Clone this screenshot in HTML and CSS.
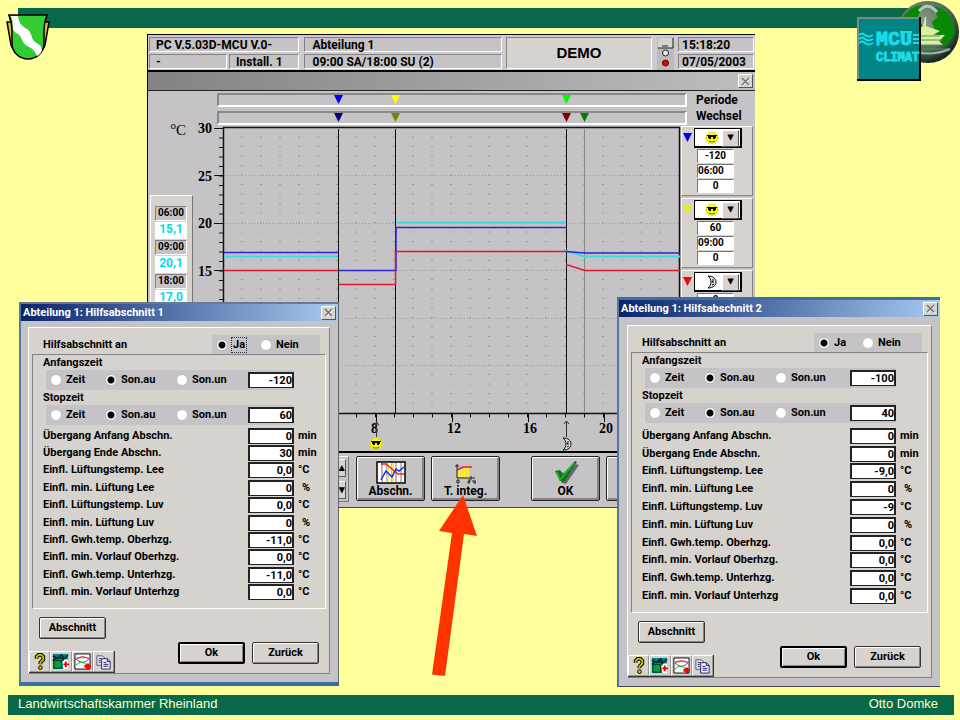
FILE: index.html
```html
<!DOCTYPE html>
<html lang="de">
<head>
<meta charset="utf-8">
<title>Abteilung 1: Hilfsabschnitt</title>
<link rel="stylesheet" href="styles.css">
</head>
<body>
<svg class="defs" aria-hidden="true">
  <defs>
    <symbol id="sun" viewBox="0 0 14 14">
      <path d="M7 0l1.500 2 2-1.200.5 2.400 2.500 0-1 2.300 2 1.500-2 1.500 1 2.300-2.500 0-.5 2.400-2-1.200L7 14l-1.500-2-2 1.200L3 10.800l-2.500 0 1-2.300L0 7l1.500-1.500-1-2.300 2.500 0 .5-2.400 2 1.200z" fill="#e8e000"/>
      <circle cx="7" cy="7" r="5" fill="#ff0"/>
      <path d="M2 4h10v1h-1v2h-1v1H8V6H6v2H4V7H3V5H2z" fill="#000"/>
      <path d="M4 10h1v1h4v-1h1" fill="none" stroke="#664"/>
    </symbol>
    <symbol id="moon" viewBox="0 0 10 14">
      <path d="M1 1c5 0 8 2.500 8 6s-3 6-8 6c2-1.500 3-3.500 3-6s-1-4.500-3-6z" fill="#e8e8e8" stroke="#000"/>
      <path d="M6 4v2l-1 1h2M5 10l2-1" fill="none" stroke="#000"/>
    </symbol>
    <symbol id="cross" viewBox="0 0 9 9">
      <path d="M1 1l7 7M8 1L1 8" stroke="#fff" transform="translate(1 1)"/>
      <path d="M1 1l7 7M8 1L1 8" stroke="#777" stroke-width="1.500"/>
    </symbol>
    <symbol id="help" viewBox="0 0 18 18">
      <path d="M6 6V4l2-2h3l2 2v3l-3 3v2" fill="none" stroke="#000" stroke-width="4"/>
      <path d="M6 6V4l2-2h3l2 2v3l-3 3v2" fill="none" stroke="#c8c000" stroke-width="2"/>
      <circle cx="10" cy="15.500" r="2" fill="#c8c000" stroke="#000"/>
    </symbol>
    <symbol id="house" viewBox="0 0 18 18">
      <path d="M1 1h16v16H1z" fill="#008484"/>
      <path d="M1 3l5 3 4-4 3 4 4-4M1 8l3-3h6l3 3" fill="none" stroke="#002828" stroke-width="1.500"/>
      <path d="M2 8h8v8H2z" fill="#00a040" stroke="#003818"/>
      <path d="M11 10l2-3h4v10h-5z" fill="#fff"/>
      <path d="M14.500 9v6M12 12h6" stroke="#e00000" stroke-width="2"/>
    </symbol>
    <symbol id="curve" viewBox="0 0 18 18">
      <path d="M1 1h16v16H1z" fill="#fff" stroke="#000"/>
      <path d="M2 5h14" stroke="#888"/>
      <path d="M2 7c4-4 10-4 14 0" fill="none" stroke="#f00"/>
      <path d="M2 6c4 5 10 5 14 0" fill="none" stroke="#33f"/>
      <path d="M2 13c4-4 8-4 12 0" fill="none" stroke="#0b0"/>
      <path d="M14.500 11v7M11 14h7" stroke="#f00" stroke-width="3"/>
    </symbol>
    <symbol id="copy" viewBox="0 0 18 18">
      <path d="M2 3h6l2 2v8H2z" fill="#e8e8f4" stroke="#556"/>
      <path d="M7 6h6l3 3v8H7z" fill="#eef" stroke="#226"/>
      <path d="M13 6v3h3M9 10h3M9 12h5M9 14h5M4 6h3M4 8h2M4 10h2" fill="none" stroke="#226"/>
    </symbol>
  </defs>
</svg>

<div class="slide">
  <header class="band band-top"></header>
  <svg class="crest" viewBox="0 0 44 48" role="img" aria-label="Wappen">
    <path d="M3 1L5 8 1 8 5 31q3 8 10 12M41 1l-2 7h4l-4 23q-3 8-10 12" fill="#e8b820" stroke="#000" stroke-width="1.500"/>
    <path d="M3 1h38q-3 7-3 15v13c0 10-8 16-16 16S6 39 6 29V16Q6 8 3 1z" fill="#3c3" stroke="#000" stroke-width="1.500"/>
    <path d="M5 2h7q0 7 7 12c8 3 5 10 10 14 5 3 7 5 7 8q-1 4-5 6-3-7-8-9c-8-4-6-9-11-13Q6 17 7 13q0-6-2-11z" fill="#fff"/>
  </svg>

  <svg class="globe" viewBox="0 0 64 64" role="img" aria-label="Globus">
    <defs><radialGradient id="ball" cx=".4" cy=".35" r=".65"><stop offset="0" stop-color="#8ba08a"/><stop offset=".7" stop-color="#4f6a58"/><stop offset="1" stop-color="#17281f"/></radialGradient></defs>
    <circle cx="32" cy="32" r="31" fill="url(#ball)"/>
    <path d="M4 21Q14 5 27 5l-5 12 5 10-6 4Q10 24 4 21zM36 6q16 2 21 16l2 12-8 11-8 1 4-8-7-4-4-12 6-5z" fill="#068a06"/>
    <path d="M18 32l9-6 2-9h1v9l14 5-7 4h12l-6 6 4 4H17z" fill="#d8f0a0"/>
    <path d="M18 36h26M16 40h30M20 45h26M22 49h30" stroke="#5d8c58"/>
    <path d="M23 11q9-10 18 1" fill="none" stroke="#b9c4bd" stroke-width="3"/>
    <path d="M12 49q20 9 42 0" fill="none" stroke="#a4b3aa" stroke-width="2"/>
  </svg>
  <svg class="mcu" viewBox="0 0 64 64" role="img" aria-label="MCU Climat">
    <path d="M0 0h64v64H0z" fill="#000"/>
    <path d="M0 0h62v62H0z" fill="#7a8a88"/>
    <path d="M2 2h60v60H2z" fill="#008484"/>
    <path d="M2 18q3-3 6 0t8 0M2 22q3-3 6 0t8 0M2 26q3-3 6 0t8 0M56 18h6M56 22h6M56 26h6M43 15h12" fill="none" stroke="#19dce8" stroke-width="2"/>
    <text x="19" y="28" class="mcu-big">MCU</text>
    <text x="19" y="44" class="mcu-small">CLIMAT</text>
  </svg>

  <main class="stage">
    <section class="monitor">
      <div class="status">
        <div class="stack first">
          <span class="cell wide">PC V.5.03D-MCU V.0-</span>
          <span class="cell">-</span><span class="cell">Install. 1</span>
        </div>
        <div class="stack">
          <span class="cell">Abteilung 1</span>
          <span class="cell">09:00 SA/18:00 SU (2)</span>
        </div>
        <div class="demo">DEMO</div>
        <svg class="lamp" viewBox="0 0 17 33" role="img" aria-label="Alarm">
          <path d="M0 0h17v33H0z" fill="#bdbabd"/><path d="M1 1h15v10H1z" fill="#d6d3ce"/>
          <path d="M1 11h15V1" fill="none" stroke="#222"/><path d="M5 9h6" stroke="#222"/>
          <circle cx="8.500" cy="16" r="3" fill="#e8e8e8" stroke="#222"/>
          <circle cx="8.500" cy="26" r="3" fill="#e00" stroke="#600"/>
        </svg>
        <div class="stack">
          <span class="cell">15:18:20</span>
          <span class="cell">07/05/2003</span>
        </div>
      </div>
      <div class="monitor-title"><button class="close" aria-label="Fenster schließen"><svg><use href="#cross"/></svg></button></div>
      <div class="work">
        <div class="left">
          <div class="unit"><sup>o</sup>C</div>
          <div class="readings">
            <span class="hour">06:00</span><span class="temp">15,1</span>
            <span class="hour">09:00</span><span class="temp">20,1</span>
            <span class="hour">18:00</span><span class="temp">17,0</span>
          </div>
        </div>
        <svg class="chart" viewBox="0 0 487 361">
          <defs>
            <pattern id="dots" x="39" y="37" width="19" height="9.500" patternUnits="userSpaceOnUse"><path d="M8 9h2" stroke="#9c9a9c"/></pattern>
          </defs>
          <g class="gauge">
            <path d="M24 3h468v12H24zM24 21h468v12H24z" fill="#c6c3c6"/>
            <path d="M24 15V3h468M24 33V21h468" stroke="#777" fill="none" stroke-width="1.500"/>
            <path d="M24 15h468V3M24 33h468V21" stroke="#fff" fill="none" stroke-width="2"/>
          </g>
          <path d="M140 4h9l-4.500 9z" fill="#00f"/><path d="M197 4h9l-4.500 9z" fill="#ff0"/><path d="M368 4h9l-4.500 9z" fill="#0f0"/>
          <path d="M140 22h9l-4.500 9z" fill="#000080"/><path d="M197 22h9l-4.500 9z" fill="#808000"/><path d="M368 22h9l-4.500 9z" fill="#800000"/><path d="M386 22h9l-4.500 9z" fill="#008000"/>
          <path d="M30 37h456v285H30z" fill="url(#dots)"/>
          <path d="M30 84.500h456M30 132.500h456M30 179.500h456M30 227.500h456M30 274.500h456" stroke="#9c9a9c" stroke-dasharray="1 2"/>
          <path d="M29.500 322.500V36.500h456v286M19 322.500h468" fill="none" stroke="#111" stroke-width="1.500"/>
          <path d="M20 37.500h9M20 84.500h9M20 132.500h9M20 179.500h9M20 227.500h9M20 274.500h9" stroke="#111"/>
          <path d="M27 37v285" stroke="#111" stroke-width="4" stroke-dasharray="1 8.500"/>
          <path d="M29 324.500h458" stroke="#111" stroke-width="4" stroke-dasharray="1 18"/>
          <path d="M182.500 322v9M258.500 322v9M334.500 322v9M410.500 322v9" stroke="#111"/>
          <path d="M144.500 38v284M201.500 38v284M372.500 38v284" stroke="#111"/>
          <path d="M390.500 38v284" stroke="#888"/>
          <path d="M30 165.500h114M202 131.500h170M372 160l19 5.500h95" fill="none" stroke="#38dfe0" stroke-width="2"/>
          <path d="M30 161.500h114" fill="none" stroke="#2a22d8" stroke-width="1.500"/>
          <path d="M145 179.500h57V136.500h170" fill="none" stroke="#2a22d8" stroke-width="1.500"/>
          <path d="M372 160.500l19 1.500h95" fill="none" stroke="#2a22d8" stroke-width="1.500"/>
          <path d="M30 179.500h114" fill="none" stroke="#e01828" stroke-width="1.500"/>
          <path d="M145 193.500h56.500V160.500H372" fill="none" stroke="#e01828" stroke-width="1.500"/>
          <path d="M372 173.500l19 6h95" fill="none" stroke="#e01828" stroke-width="1.500"/>
          <g class="axis">
            <text x="4" y="42">30</text><text x="4" y="90">25</text><text x="4" y="137">20</text><text x="4" y="185">15</text>
            <text x="177" y="342">8</text><text x="253" y="342">12</text><text x="329" y="342">16</text><text x="405" y="342">20</text>
          </g>
          <path d="M182.500 330v16M180 334l2.500-3 2.500 3M372.500 330v16M370 333l2.500-3 2.500 3" fill="none" stroke="#333"/>
          <use href="#sun" x="175" y="346" width="14" height="14"/>
          <use href="#moon" x="368" y="346" width="10" height="14"/>
        </svg>
        <div class="right">
          <div class="captions">Periode<br>Wechsel</div>
          <div class="period">
            <svg class="mark" viewBox="0 0 9 9"><path d="M0 0h9L4.500 9z" fill="#00f"/></svg>
            <div class="pick"><select aria-label="Periode 1"><option aria-label="Sonne"></option></select><svg class="sky"><use href="#sun"/></svg></div>
            <input aria-label="Versatz 1" value="-120"><input class="clock" aria-label="Zeit 1" value="06:00"><input aria-label="Wechsel 1" value="0">
          </div>
          <div class="period">
            <svg class="mark" viewBox="0 0 9 9"><path d="M0 0h9L4.500 9z" fill="#f0f000"/></svg>
            <div class="pick"><select aria-label="Periode 2"><option aria-label="Sonne"></option></select><svg class="sky"><use href="#sun"/></svg></div>
            <input aria-label="Versatz 2" value="60"><input class="clock" aria-label="Zeit 2" value="09:00"><input aria-label="Wechsel 2" value="0">
          </div>
          <div class="period">
            <svg class="mark" viewBox="0 0 9 9"><path d="M0 0h9L4.500 9z" fill="#f00"/></svg>
            <div class="pick"><select aria-label="Periode 3"><option aria-label="Mond"></option></select><svg class="sky"><use href="#moon"/></svg></div>
            <input aria-label="Versatz 3" value="0">
          </div>
        </div>
      </div>
      <div class="actions">
        <div class="spin"><button aria-label="Auf">▴</button><button aria-label="Ab">▾</button></div>
        <button class="tool">
          <svg width="30" height="24" viewBox="0 0 30 24"><path d="M1 2h28v21H1z" fill="#fff" stroke="#000" stroke-width="1.500"/><path d="M6 3v19M11 3v19M16 3v19M20 3v19M25 3v19" stroke="#777"/><path d="M12 3v19M17 3v19" stroke="#ee4" stroke-width="2"/><path d="M5 4h5l6 5 6 5h6" fill="none" stroke="#e22" stroke-width="1.500"/><path d="M5 20l5-9 6 6 4-8 3 2 5-4" fill="none" stroke="#22e" stroke-width="1.500"/></svg>
          Abschn.</button>
        <button class="tool">
          <svg width="30" height="24" viewBox="0 0 30 24"><path d="M8 10v7M11 9v8M14 8v9M17 8v9" stroke="#fe2" stroke-width="2.500"/><path d="M6 4v14h18M4 6h4M20 16v4" fill="none" stroke="#222"/><path d="M6 10l6-3h9" fill="none" stroke="#e22" stroke-width="1.500"/><path d="M6 20v3h2v-3zM17 20h2v1.500h-2V23h2M22 20v2h3M24 20v4" fill="none" stroke="#222"/></svg>
          T. integ.</button>
        <button class="tool ok">
          <svg width="30" height="24" viewBox="0 0 30 24"><path d="M5 12l5-1 3 4L24 3l3 1-13 19-4-1z" fill="#667" transform="translate(1 1)"/><path d="M4 11l5-1 3 4L24 1l2 1-13 20-4-1z" fill="#087a18"/><path d="M6 12l3 8L23 3" fill="none" stroke="#2fae3a" stroke-width="1.500"/></svg>
          OK</button>
        <button class="tool" aria-label="Zurück"></button>
      </div>
    </section>

    <section class="dialog one">
      <h2>Abteilung 1: Hilfsabschnitt 1<button class="close" aria-label="Schließen"><svg><use href="#cross"/></svg></button></h2>
      <form class="sheet">
        <div class="enable"><span>Hilfsabschnitt an</span>
          <div class="yesno"><label class="focus"><input type="radio" name="a1" checked><span>Ja</span></label><label><input type="radio" name="a1"><span>Nein</span></label></div></div>
        <div class="group">
          <h3>Anfangszeit</h3>
          <div class="mode"><label><input type="radio" name="b1">Zeit</label><label><input type="radio" name="b1" checked>Son.au</label><label><input type="radio" name="b1">Son.un</label><input class="num" aria-label="Anfangszeit" value="-120"></div>
          <h3>Stopzeit</h3>
          <div class="mode"><label><input type="radio" name="c1">Zeit</label><label><input type="radio" name="c1" checked>Son.au</label><label><input type="radio" name="c1">Son.un</label><input class="num" aria-label="Stopzeit" value="60"></div>
          <div class="fields">
            <label for="p0">Übergang Anfang Abschn.</label><input class="num" id="p0" value="0"><span>min</span>
            <label for="p1">Übergang Ende Abschn.</label><input class="num" id="p1" value="30"><span>min</span>
            <label for="p2">Einfl. Lüftungstemp. Lee</label><input class="num" id="p2" value="0,0"><span>°C</span>
            <label for="p3">Einfl. min. Lüftung Lee</label><input class="num" id="p3" value="0"><span class="pct">%</span>
            <label for="p4">Einfl. Lüftungstemp. Luv</label><input class="num" id="p4" value="0,0"><span>°C</span>
            <label for="p5">Einfl. min. Lüftung Luv</label><input class="num" id="p5" value="0"><span class="pct">%</span>
            <label for="p6">Einfl. Gwh.temp. Oberhzg.</label><input class="num" id="p6" value="-11,0"><span>°C</span>
            <label for="p7">Einfl. min. Vorlauf Oberhzg.</label><input class="num" id="p7" value="0,0"><span>°C</span>
            <label for="p8">Einfl. Gwh.temp. Unterhzg.</label><input class="num" id="p8" value="-11,0"><span>°C</span>
            <label for="p9">Einfl. min. Vorlauf Unterhzg</label><input class="num" id="p9" value="0,0"><span>°C</span>
          </div>
        </div>
        <div class="foot">
          <button type="button" class="btn section">Abschnitt</button>
          <div class="confirm"><button type="button" class="btn default">Ok</button><button type="button" class="btn">Zurück</button></div>
          <div class="icons"><button type="button" aria-label="Hilfe"><svg><use href="#help"/></svg></button><button type="button" aria-label="Haus"><svg><use href="#house"/></svg></button><button type="button" aria-label="Kurve"><svg><use href="#curve"/></svg></button><button type="button" aria-label="Kopieren"><svg><use href="#copy"/></svg></button></div>
        </div>
      </form>
    </section>

    <section class="dialog two">
      <h2>Abteilung 1: Hilfsabschnitt 2<button class="close" aria-label="Schließen"><svg><use href="#cross"/></svg></button></h2>
      <form class="sheet">
        <div class="enable"><span>Hilfsabschnitt an</span>
          <div class="yesno"><label><input type="radio" name="a2" checked><span>Ja</span></label><label><input type="radio" name="a2"><span>Nein</span></label></div></div>
        <div class="group">
          <h3>Anfangszeit</h3>
          <div class="mode"><label><input type="radio" name="b2">Zeit</label><label><input type="radio" name="b2" checked>Son.au</label><label><input type="radio" name="b2">Son.un</label><input class="num" aria-label="Anfangszeit" value="-100"></div>
          <h3>Stopzeit</h3>
          <div class="mode"><label><input type="radio" name="c2">Zeit</label><label><input type="radio" name="c2" checked>Son.au</label><label><input type="radio" name="c2">Son.un</label><input class="num" aria-label="Stopzeit" value="40"></div>
          <div class="fields">
            <label for="q0">Übergang Anfang Abschn.</label><input class="num" id="q0" value="0"><span>min</span>
            <label for="q1">Übergang Ende Abschn.</label><input class="num" id="q1" value="0"><span>min</span>
            <label for="q2">Einfl. Lüftungstemp. Lee</label><input class="num" id="q2" value="-9,0"><span>°C</span>
            <label for="q3">Einfl. min. Lüftung Lee</label><input class="num" id="q3" value="0"><span class="pct">%</span>
            <label for="q4">Einfl. Lüftungstemp. Luv</label><input class="num" id="q4" value="-9"><span>°C</span>
            <label for="q5">Einfl. min. Lüftung Luv</label><input class="num" id="q5" value="0"><span class="pct">%</span>
            <label for="q6">Einfl. Gwh.temp. Oberhzg.</label><input class="num" id="q6" value="0,0"><span>°C</span>
            <label for="q7">Einfl. min. Vorlauf Oberhzg.</label><input class="num" id="q7" value="0,0"><span>°C</span>
            <label for="q8">Einfl. Gwh.temp. Unterhzg.</label><input class="num" id="q8" value="0,0"><span>°C</span>
            <label for="q9">Einfl. min. Vorlauf Unterhzg</label><input class="num" id="q9" value="0,0"><span>°C</span>
          </div>
        </div>
        <div class="foot">
          <button type="button" class="btn section">Abschnitt</button>
          <div class="confirm"><button type="button" class="btn default">Ok</button><button type="button" class="btn">Zurück</button></div>
          <div class="icons"><button type="button" aria-label="Hilfe"><svg><use href="#help"/></svg></button><button type="button" aria-label="Haus"><svg><use href="#house"/></svg></button><button type="button" aria-label="Kurve"><svg><use href="#curve"/></svg></button><button type="button" aria-label="Kopieren"><svg><use href="#copy"/></svg></button></div>
        </div>
      </form>
    </section>

    <svg class="arrow" viewBox="0 0 46 182" aria-hidden="true"><path d="M32 0l14 41-13-2L14 181l-13-1.500L21 38 8 36z" fill="#f30"/></svg>
  </main>

  <footer class="band band-bottom"><span>Landwirtschaftskammer Rheinland</span><span>Otto Domke</span></footer>
</div>
</body>
</html>
```
FILE: styles.css
```css
* { box-sizing: border-box; }
body {
  margin: 0;
  background: #ffff9c;
  color: #000;
  font: bold 11px/14px Roboto, "Liberation Sans", sans-serif;
}
button, input, select { font: inherit; color: inherit; margin: 0; padding: 0; border-radius: 0; }
button { cursor: pointer; }
svg { display: block; }
.defs { position: absolute; width: 0; height: 0; }

.slide { position: relative; min-height: 100vh; display: flex; flex-direction: column; }
.band { background: #08694a; }
.band-top { height: 20px; margin: 8px 20px 0 18px; }
.band-bottom {
  display: flex; justify-content: space-between;
  margin: 0 6px 5px 8px; padding: 0 16px 2px 10px;
  color: #ffffc8; font: 13px/18px "Liberation Sans", sans-serif;
}
.crest { position: absolute; left: 6px; top: 14px; width: 44px; height: 48px; }
.globe { position: absolute; right: 0; top: 0; width: 64px; height: 64px; }
.mcu { position: absolute; right: 39px; top: 17px; width: 64px; height: 64px; }
.mcu text { font-family: "Liberation Mono", monospace; font-weight: bold; fill: #19dce8; stroke: #19dce8; }
.mcu-big { font-size: 20px; }
.mcu-small { font-size: 12px; }

.stage { flex: 1; }

/* Climate computer window */
.monitor {
  position: absolute; left: 147px; top: 34px; width: 608px;
  background: #c6c3c6; border: 1px solid #000; border-right: 0; border-bottom-color: #444;
}
.status {
  display: grid; grid-template-columns: 150px 198px 146px 17px 76px;
  justify-content: space-between; height: 37px; padding: 2px 1px 0;
  border-bottom: 2px solid #000; background: #cecbce;
  font-size: 12px;
}
.stack { display: grid; grid-template-rows: 15px 15px; gap: 2px; align-content: start; }
.first { grid-template-columns: 78px 1fr; column-gap: 2px; }
.wide { grid-column: 1 / -1; }
.cell { padding: 0 8px; line-height: 14px; background: #c6c3c6; border: 1px solid; border-color: #848284 #fff #fff #848284; }
.first .cell { padding: 0 6px; }
.status > :last-child .cell { padding: 0 3px; }
.demo { display: grid; place-items: center; height: 32px; background: #d6d3ce; border: 1px solid; border-color: #848284 #fff #fff #848284; font-family: "Liberation Sans", sans-serif; font-size: 15px; }
.lamp { width: 17px; height: 33px; }
.monitor-title { display: flex; justify-content: flex-end; padding: 2px; height: 19px; background: linear-gradient(90deg, #848284, #bdbebd); border-bottom: 1px solid #222; }
.close { display: grid; place-items: center; width: 15px; height: 14px; background: #d6d3ce; border: 1px solid; border-color: #fff #555 #555 #fff; }
.close svg { width: 9px; height: 9px; }
.work { display: grid; grid-template-columns: 46px 1fr 74px; height: 360px; }
.left { padding-top: 30px; }
.unit { text-align: right; padding-right: 8px; height: 74px; font: 15px/18px "Liberation Serif", serif; }
.unit sup { font-size: 11px; line-height: 0; }
.readings { display: grid; grid-auto-rows: 15px 17px; gap: 1px; width: 43px; margin-left: 2px; padding: 10px 5px 2px 4px; background: #d6d3ce; border: 1px solid; border-color: #fff #777 #777 #fff; text-align: center; }
.hour { background: #c6c3c6; border: 1px solid; border-color: #848284 #fff #fff #848284; font-size: 10px; line-height: 12px; }
.temp { background: #fff; color: #00dcec; font-size: 12px; line-height: 15px; }
.chart { width: 100%; height: 361px; overflow: visible; }
.axis { font: bold 14px "Liberation Serif", serif; }
.captions { padding: 1px 0 2px 15px; font-size: 12px; line-height: 16px; }
.period { display: grid; grid-template-columns: 9px 48px; grid-template-rows: 20px; grid-auto-rows: 14px; column-gap: 2px; row-gap: 1px; height: 70px; margin-bottom: 2px; padding: 1px; width: 72px; background: #d6d3ce; border: 1px solid; border-color: #fff #848284 #848284 #fff; }
.period input { grid-column: 2; width: 37px; margin-left: 3px; background: #fff; border: 1px solid; border-color: #777 #fff #fff #777; text-align: center; font-size: 10px; }
.period .clock { text-align: left; }
.period:last-child { height: 36px; margin: 0; }
.mark { width: 9px; height: 9px; margin-top: 5px; }
.pick { position: relative; }
.pick select { appearance: none; width: 48px; height: 20px; background: #fff; border: 1px solid #000; border-width: 1px 2px 2px 1px; }
.pick::after { content: "▾"; position: absolute; right: 3px; top: 2px; width: 15px; height: 15px; background: #d6d3ce; border: 1px solid; border-color: #fff #555 #555 #fff; font: 13px/12px "DejaVu Sans", sans-serif; text-align: center; pointer-events: none; }
.sky { position: absolute; left: 11px; top: 3px; width: 14px; height: 14px; pointer-events: none; }
.actions { display: flex; align-items: flex-start; border-top: 2px solid #000; padding: 3px 0 5px 168px; height: 56px; overflow: hidden; }
.spin { display: grid; gap: 4px; width: 33px; margin-right: 7px; padding: 2px; background: #c6c3c6; border: 1px solid; border-color: #fff #777 #777 #fff; }
.spin button { height: 18px; background: #d6d3ce; border: 1px solid; border-color: #fff #555 #555 #fff; font-size: 11px; line-height: 12px; text-align: right; }
.tool { display: flex; flex-direction: column; align-items: center; flex: none; width: 69px; height: 45px; margin-right: 6px; padding-top: 3px; background: #c6c3c6; border: 1px solid #222; border-radius: 2px; box-shadow: inset 1px 1px #fff, inset -2px -2px #848284; font-size: 12px; }
.ok { margin-left: 25px; }

/* Dialogs */
.dialog { position: absolute; display: flex; flex-direction: column; background: #c6c3c6; border: 2px solid #5874a0; border-top-color: #6b7890; border-right: 1px solid #666; }
.dialog h2 { display: flex; justify-content: space-between; align-items: center; margin: 0; padding: 0 2px; height: 17px; color: #fff; background: linear-gradient(90deg, #0a246a, #a6caf0); font: inherit; }
.one { left: 19px; top: 302px; width: 320px; border-bottom: 4px solid #3a6ea5; }
.two { left: 617px; top: 297px; width: 323px; border-top: 3px solid #3a6ea5; border-right-width: 0; border-bottom: 1px solid #444; }
.sheet { margin: 6px 8px 8px 7px; padding: 7px 3px 0 3px; background: #d6d3ce; border: 1px solid; border-color: #fff #848284 #848284 #fff; }
.two .sheet { margin: 8px; }
.enable { display: flex; justify-content: space-between; align-items: center; padding: 0 6px 0 11px; height: 19px; }
.yesno { display: grid; grid-template-columns: 44px 1fr; width: 108px; height: 19px; padding-left: 4px; background: #c6c3c6; }
.yesno label, .mode label { display: flex; align-items: center; gap: 4px; }
input[type="radio"] { appearance: none; flex: none; width: 12px; height: 12px; border-radius: 50%; background: #fff; border: 1px solid #bbb; }
input[type="radio"]:checked { background: radial-gradient(circle, #000 0 3px, #fff 4px); }
.focus span { outline: 1px dotted #333; padding: 0 1px; }
.group { padding: 0 0 7px 10px; border: 1px solid; border-color: #848284 #fff #fff #848284; }
h3 { margin: 0; font: inherit; line-height: 15px; }
.mode { display: grid; grid-template-columns: 55px 71px 1fr 46px; align-items: center; height: 20px; margin: 0 31px 0 3px; padding-left: 4px; background: #c6c3c6; }
.num { width: 46px; height: 16px; padding: 0; border: 1px solid #222; border-width: 2px 2px 1px; background: #fff; text-align: right; }
.fields { display: grid; grid-template-columns: 1fr 46px 22px; grid-template-rows: repeat(10, 1fr); column-gap: 4px; align-items: center; height: 174px; margin: 2px 5px 0 0; }
.two .fields { height: 178px; margin-top: 4px; }
.pct { padding-left: 4px; }
.foot { display: grid; grid-template-columns: 1fr auto; grid-template-rows: 33px 31px; margin: 0 7px 0 -3px; }
.btn { width: 67px; height: 22px; background: #d6d3ce; border: 1px solid #333; border-radius: 2px; box-shadow: inset 1px 1px #fff, inset -1px -1px #848284; }
.section { grid-column: 1 / -1; margin: 8px 0 0 10px; }
.confirm { grid-column: 2; grid-row: 2; display: flex; gap: 7px; }
.default { border: 2px solid #000; }
.icons { grid-column: 1; grid-row: 2; align-self: end; display: flex; width: 86px; border-right: 1px solid #333; border-bottom: 1px solid #333; }
.icons button { display: grid; place-items: center; flex: 1; height: 21px; background: #d6d3ce; border: 1px solid; border-color: #fff #999 #999 #fff; }
.icons svg { width: 17px; height: 17px; }

.arrow { position: absolute; left: 431px; top: 495px; width: 46px; height: 182px; }
```
